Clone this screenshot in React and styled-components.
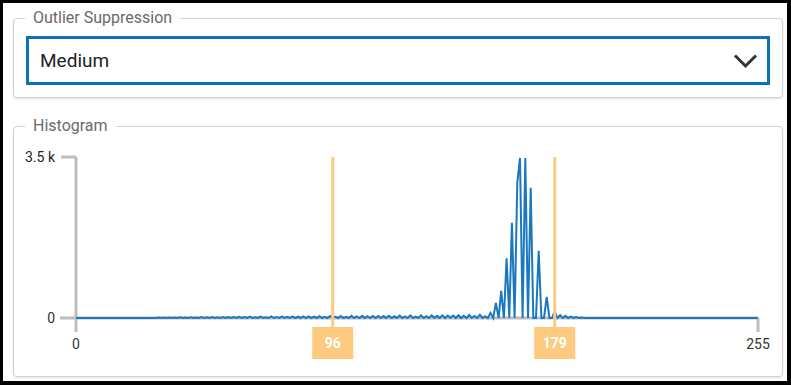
import React from "react";
import styled, { createGlobalStyle } from "styled-components";

const GlobalStyle = createGlobalStyle`
  html, body {
    margin: 0;
    padding: 0;
    background: #ffffff;
    font-family: Roboto, "Liberation Sans", sans-serif;
  }
`;

const Frame = styled.div`
  width: 791px;
  height: 385px;
  box-sizing: border-box;
  border: 3px solid #000;
  border-right-width: 4px;
  border-bottom-width: 4px;
  padding: 5px 4px 0 10px;
  display: flex;
  flex-direction: column;
  gap: 18px;
  background: #fff;
`;

const Fieldset = styled.fieldset`
  margin: 0;
  padding: ${(p) => p.$pad};
  border: 1px solid #d2d2d2;
  border-radius: 4px;
  box-shadow: 0 1px 2px rgba(0, 0, 0, 0.12);
  min-width: 0;
`;

const Legend = styled.legend`
  margin-left: ${(p) => p.$offset}px;
  padding: 0 8px;
  font-size: 16px;
  line-height: 20px;
  color: #6a6a6a;
`;

const Select = styled.div`
  margin-top: 8px;
  height: 49px;
  box-sizing: border-box;
  border: 3px solid #0b72b5;
  padding: 0 9px 0 11px;
  display: flex;
  align-items: center;
  justify-content: space-between;
  font-size: 19px;
  color: #222;
`;

const Chart = styled.svg`
  display: block;
  width: 768px;
  height: 240px;
`;

const AXIS = "#bdbdbd";
const BLUE = "#1a78c0";
const ORANGE = "#fdca80";

const X0 = 76;
const X1 = 758;
const Y0 = 318;
const YTOP = 157;
const MAX = 3500;

const xOf = (bin) => X0 + (bin / 255) * (X1 - X0);
const yOf = (v) => Y0 - (v / MAX) * (Y0 - YTOP);

const peaks = {
  155: 110, 157: 330, 159: 590, 161: 1300, 163: 2070, 165: 2950, 166: 3480,
  168: 3480, 170: 2830, 173: 1460, 176: 460, 179: 150,
  181: 60, 183: 45, 185: 30, 187: 20, 189: 12,
};

// low-level noise ahead of the main peak
const data = Array.from({ length: 256 }, (_, i) => {
  if (peaks[i] !== undefined) return peaks[i];
  if (i >= 31 && i < 155 && i % 2 === 1) {
    const base = 12 + ((i - 31) / 124) * 60;
    return base * (0.5 + 0.5 * Math.abs(Math.sin(i * 2.3)));
  }
  return 0;
});

const linePath = data
  .map((v, i) => `${i === 0 ? "M" : "L"}${xOf(i).toFixed(1)},${yOf(v).toFixed(1)}`)
  .join(" ");

const Marker = ({ bin }) => {
  const x = xOf(bin);
  return (
    <g>
      <line x1={x} y1={YTOP} x2={x} y2={327} stroke={ORANGE} strokeWidth="3" />
      <rect x={x - 20.5} y={327} width={41} height={32} fill={ORANGE} />
      <text
        x={x}
        y={348}
        textAnchor="middle"
        fontSize="14"
        fontWeight="700"
        fill="#fff"
      >
        {bin}
      </text>
    </g>
  );
};

const Histogram = () => (
  <Chart viewBox="0 0 768 240">
    <g transform="translate(-14,-136)" fontFamily="Roboto, 'Liberation Sans', sans-serif">
      <line x1={X0} y1={YTOP} x2={X0} y2={332} stroke={AXIS} strokeWidth="3" />
      <line x1={61} y1={YTOP} x2={X0} y2={YTOP} stroke={AXIS} strokeWidth="3" />
      <line x1={60} y1={Y0} x2={X1} y2={Y0} stroke={AXIS} strokeWidth="3" />
      <line x1={X1} y1={Y0} x2={X1} y2={332} stroke={AXIS} strokeWidth="3" />
      <text x={55} y={162} textAnchor="end" fontSize="14" fill="#222">3.5 k</text>
      <text x={55} y={323} textAnchor="end" fontSize="14" fill="#333">0</text>
      <text x={X0} y={349} textAnchor="middle" fontSize="14" fill="#333">0</text>
      <text x={X1} y={349} textAnchor="middle" fontSize="14" fill="#333">255</text>
      <path d={linePath} fill="none" stroke={BLUE} strokeWidth="2" />
      <Marker bin={96} />
      <Marker bin={179} />
    </g>
  </Chart>
);

const Chevron = () => (
  <svg width="25" height="16" viewBox="0 0 25 16">
    <polyline points="2,2.5 12.5,13 23,2.5" fill="none" stroke="#333" strokeWidth="3" />
  </svg>
);

export default function App() {
  return (
    <>
      <GlobalStyle />
      <Frame>
        <Fieldset $pad="0 12px 12px">
          <Legend $offset={-1}>Outlier Suppression</Legend>
          <Select>
            <span>Medium</span>
            <Chevron />
          </Select>
        </Fieldset>
        <Fieldset $pad="0">
          <Legend $offset={11}>Histogram</Legend>
          <Histogram />
        </Fieldset>
      </Frame>
    </>
  );
}
